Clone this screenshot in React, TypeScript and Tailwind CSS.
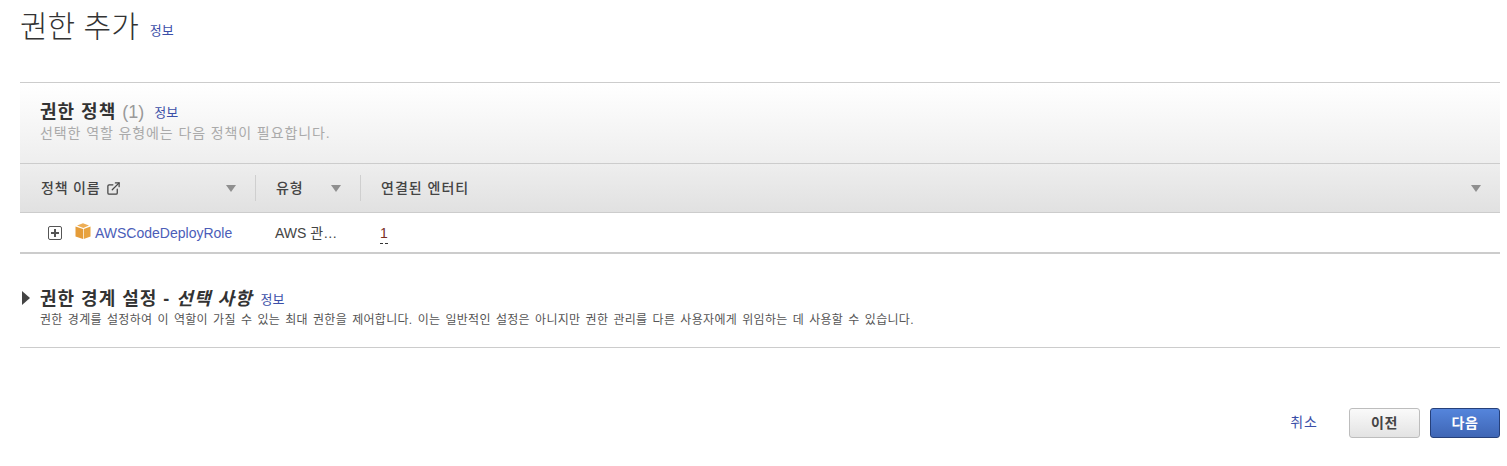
import React from "react";
import { ExternalLink } from "lucide-react";

const Info = ({ className = "" }: { className?: string }) => (
  <a className={`text-[13px] leading-[16px] text-[#3b4fa8] ${className}`}>정보</a>
);

const Caret = () => (
  <span className="block w-0 h-0 border-l-[5px] border-r-[5px] border-t-[7px] border-l-transparent border-r-transparent border-t-[#8f8f8f]" />
);

const Cube = () => (
  <svg width="16" height="16" viewBox="0 0 16 16" className="block shrink-0">
    <path d="M0.5 3.5 L8 6 L8 16 L0.5 13.5Z" fill="#e59c38" />
    <path d="M15.5 3.5 L8.7 6 L8.7 16 L15.5 13.5Z" fill="#e8a33f" />
    <path d="M2 2.6 L8 0.3 L14 2.6 L8.3 4.9Z" fill="#eeae55" />
  </svg>
);

export default function App() {
  return (
    <div className="w-[1507px] h-[466px] bg-white overflow-hidden font-['Liberation_Sans','Noto_Sans_CJK_KR',sans-serif] text-[#444]">
      <div className="pl-5 pr-[7px]">
        <div className="h-[82px] flex items-start pt-[7px]">
          <h1 className="text-[30px] leading-[40px] font-light text-[#333]">권한 추가</h1>
          <Info className="ml-[11px] mt-[16px]" />
        </div>

        <section className="border-t border-[#cccccc]">
          <div className="h-[80px] bg-gradient-to-b from-[#ffffff] to-[#eeeeee] pl-5 pt-[19px]">
            <div className="flex items-center h-[20px]">
              <h2 className="text-[18px] leading-[20px] font-bold tracking-[1px] text-[#333]">권한 정책</h2>
              <span className="ml-[6px] text-[18px] leading-[20px] text-[#999]">(1)</span>
              <Info className="ml-[10px] mt-[1px]" />
            </div>
            <p className="mt-[1px] text-[14px] leading-[20px] tracking-[0.9px] text-[#aaa]">선택한 역할 유형에는 다음 정책이 필요합니다.</p>
          </div>

          <div className="h-[50px] border-y border-[#cccccc] bg-gradient-to-b from-[#eeeeee] to-[#e1e1e1] flex items-center text-[14px] tracking-[0.8px] font-medium text-[#444]">
            <div className="w-[236px] pl-[21px] pr-[19px] flex items-center h-[26px] border-r border-[#cfcfcf]">
              <span>정책 이름</span>
              <ExternalLink size={15} strokeWidth={2} className="ml-[6px] text-[#444]" />
              <span className="ml-auto"><Caret /></span>
            </div>
            <div className="w-[105px] pl-5 pr-[19px] flex items-center h-[26px] border-r border-[#cfcfcf]">
              <span>유형</span>
              <span className="ml-auto"><Caret /></span>
            </div>
            <div className="flex-1 pl-5 pr-[19px] flex items-center h-[26px]">
              <span className="tracking-[1px]">연결된 엔터티</span>
              <span className="ml-auto"><Caret /></span>
            </div>
          </div>

          <div className="h-[39px] flex items-center text-[14px]">
            <div className="w-[235px] flex items-center pl-[28px]">
              <span className="w-[14px] h-[14px] border-[1.5px] border-[#555] rounded-[2px] flex items-center justify-center mt-[1px] relative">
                <span className="absolute w-[8px] h-[1.5px] bg-[#555]" />
                <span className="absolute w-[1.5px] h-[8px] bg-[#555]" />
              </span>
              <span className="ml-[13px] mt-[-4px]"><Cube /></span>
              <a className="ml-[4px] mt-[1px] text-[#4b5db8]">AWSCodeDeployRole</a>
            </div>
            <div className="w-[105px] pl-5 mt-[1px] text-[#444] truncate">AWS 관…</div>
            <div className="pl-5 mt-[1px] text-[#7a2e1f] relative">
              <span>1</span>
              <span className="absolute left-5 top-[20px] w-[8px] border-t border-dashed border-[#333]" />
            </div>
          </div>
          <div className="h-[2px] bg-[#cccccc]" />
        </section>

        <section className="mt-[34px] h-[60px] border-b border-[#cccccc] relative">
          <span className="absolute left-[2px] top-[3px] w-0 h-0 border-y-[7px] border-l-[8px] border-y-transparent border-l-[#444]" />
          <div className="pl-5 pt-[1px] flex items-center h-[21px]">
            <h2 className="text-[18px] leading-[20px] font-bold tracking-[1px] text-[#333]">
              권한 경계 설정 - <em className="italic">선택 사항</em>
            </h2>
            <Info className="ml-[8px] mt-[1px]" />
          </div>
          <p className="pl-5 mt-[1px] text-[12px] leading-[20px] tracking-[0.3px] [word-spacing:1.5px] text-[#555]">
            권한 경계를 설정하여 이 역할이 가질 수 있는 최대 권한을 제어합니다. 이는 일반적인 설정은 아니지만 권한 관리를 다른 사용자에게 위임하는 데 사용할 수 있습니다.
          </p>
        </section>

        <div className="mt-[60px] flex items-center justify-end">
          <a className="text-[14px] leading-[20px] mt-[-2px] tracking-[1px] text-[#3b4fa8] mr-[31px]">취소</a>
          <button className="w-[71px] h-[30px] rounded-[3px] border border-[#bdbdbd] bg-gradient-to-b from-[#fafafa] to-[#e3e3e3] text-[14px] tracking-[0.5px] font-bold text-[#444] mr-[10px]">이전</button>
          <button className="w-[70px] h-[30px] rounded-[3px] border border-[#26407a] bg-gradient-to-b from-[#5585dc] to-[#3f66b5] text-[14px] tracking-[0.5px] font-bold text-white">다음</button>
        </div>
      </div>
    </div>
  );
}
